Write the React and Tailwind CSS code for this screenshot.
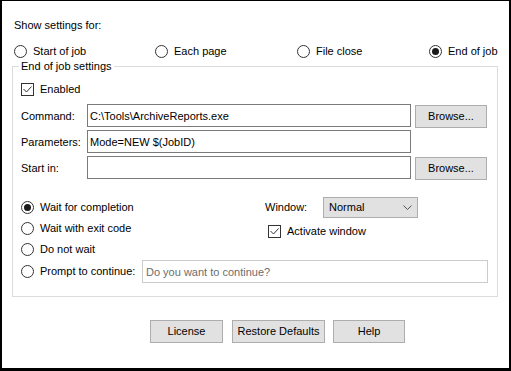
import React from 'react';

function Radio({ checked, label, className = '' }) {
  return (
    <label className={`flex items-center gap-[6px] ${className}`}>
      <span className="flex size-[13px] shrink-0 items-center justify-center rounded-full border border-[#333333] bg-white">
        {checked && <span className="size-[7px] rounded-full bg-[#1a1a1a]" />}
      </span>
      <span>{label}</span>
    </label>
  );
}

function Check({ label, className = '' }) {
  return (
    <label className={`flex items-center gap-[6px] ${className}`}>
      <span className="flex size-[13px] shrink-0 items-center justify-center border border-[#333333] bg-white">
        <svg width="11" height="11" viewBox="0 0 11 11">
          <path d="M1.5 5 L4.5 8 L9.5 2.5" fill="none" stroke="#333333" strokeWidth="1" />
        </svg>
      </span>
      <span>{label}</span>
    </label>
  );
}

export default function App() {
  return (
    <div className="w-[511px] h-[371px] overflow-hidden bg-white border-black border-t border-l-2 border-r-2 border-b-[3px] font-['Liberation_Sans',Arial,sans-serif] text-[11px] leading-[13px] text-black">
      <div className="ml-[12px] mt-[18px]">Show settings for:</div>

      {/* which event */}
      <div className="ml-[12px] mt-[13px] flex h-[13px]">
        <Radio label="Start of job" className="w-[141px]" />
        <Radio label="Each page" className="w-[142px]" />
        <Radio label="File close" className="w-[132px]" />
        <Radio label="End of job" checked />
      </div>

      <fieldset className="ml-[10px] mt-[2px] h-[237px] w-[486px] border border-[#dcdcdc] pl-[8px]">
        <legend className="-ml-[2px] px-[2px]">End of job settings</legend>

        <Check label="Enabled" className="mt-[10px] h-[13px]" />

        <div className="mt-[8px] flex h-[23px] items-start">
          <span className="mt-[6px] w-[66px]">Command:</span>
          <input
            className="h-[23px] w-[324px] border border-[#7a7a7a] px-[2px] outline-none"
            defaultValue={'C:\\Tools\\ArchiveReports.exe'}
          />
          <button className="ml-[4px] mt-[1px] h-[23px] w-[72px] border border-[#adadad] bg-[#e1e1e1]">Browse...</button>
        </div>

        <div className="mt-[3px] flex h-[23px] items-start">
          <span className="mt-[6px] w-[66px]">Parameters:</span>
          <input
            className="h-[23px] w-[324px] border border-[#7a7a7a] px-[2px] outline-none"
            defaultValue="Mode=NEW $(JobID)"
          />
        </div>

        <div className="mt-[3px] flex h-[23px] items-start">
          <span className="mt-[6px] w-[66px]">Start in:</span>
          <input className="h-[23px] w-[324px] border border-[#7a7a7a] px-[2px] outline-none" defaultValue="" />
          <button className="ml-[4px] mt-[1px] h-[23px] w-[72px] border border-[#adadad] bg-[#e1e1e1]">Browse...</button>
        </div>

        {/* wait options */}
        <div className="mt-[18px] flex">
          <div className="w-[244px]">
            <Radio checked label="Wait for completion" className="h-[21px]" />
            <Radio label="Wait with exit code" className="h-[21px]" />
            <Radio label="Do not wait" className="h-[21px]" />
          </div>
          <div>
            <div className="flex h-[21px] items-center">
              <span className="w-[58px]">Window:</span>
              <div className="flex h-[21px] w-[95px] items-center justify-between border border-[#adadad] bg-[#e1e1e1] pl-[5px] pr-[5px]">
                <span>Normal</span>
                <svg width="9" height="5" viewBox="0 0 9 5">
                  <path d="M0.5 0.5 L4.5 4.5 L8.5 0.5" fill="none" stroke="#555555" strokeWidth="1" />
                </svg>
              </div>
            </div>
            <Check label="Activate window" className="ml-[3px] mt-[7px] h-[13px]" />
          </div>
        </div>

        <div className="flex h-[23px] items-center">
          <Radio label="Prompt to continue:" className="w-[121px]" />
          <input
            className="h-[23px] w-[346px] border border-[#cccccc] px-[3px] text-[#6d6d6d] outline-none"
            defaultValue="Do you want to continue?"
          />
        </div>
      </fieldset>

      <div className="ml-[148px] mt-[23px] flex">
        <button className="h-[23px] w-[73px] border border-[#adadad] bg-[#e1e1e1]">License</button>
        <button className="ml-[9px] h-[23px] w-[93px] border border-[#adadad] bg-[#e1e1e1]">Restore Defaults</button>
        <button className="ml-[8px] h-[23px] w-[72px] border border-[#adadad] bg-[#e1e1e1]">Help</button>
      </div>
    </div>
  );
}
